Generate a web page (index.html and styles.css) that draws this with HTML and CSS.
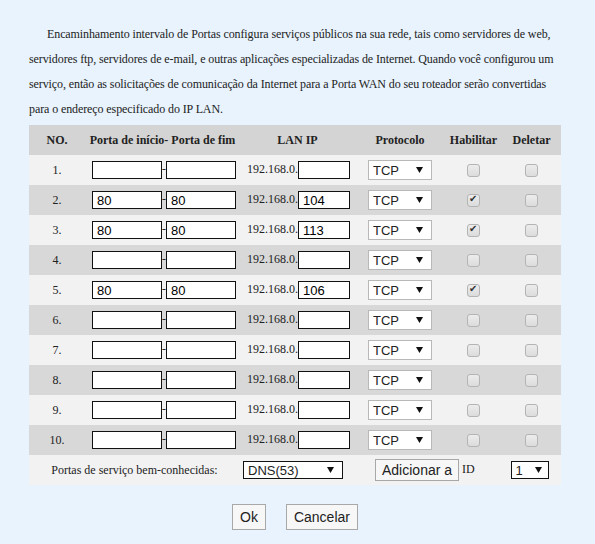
FILE: index.html
```html
<!DOCTYPE html>
<html lang="pt">
<head>
  <meta charset="UTF-8">
  <title>Encaminhamento de Portas</title>
  <link rel="stylesheet" href="styles.css">
</head>
<body>
  <main class="page">

    <p class="intro">Encaminhamento intervalo de Portas configura serviços públicos na sua rede, tais como servidores de web, servidores ftp, servidores de e-mail, e outras aplicações especializadas de Internet. Quando você configurou um serviço, então as solicitações de comunicação da Internet para a Porta WAN do seu roteador serão convertidas para o endereço especificado do IP LAN.</p>

    <table class="rules">
      <colgroup>
        <col class="c-no">
        <col class="c-port">
        <col class="c-ip">
        <col class="c-proto">
        <col class="c-on">
        <col class="c-del">
      </colgroup>
      <thead>
        <tr>
          <th>NO.</th>
          <th>Porta de início- Porta de fim</th>
          <th>LAN IP</th>
          <th>Protocolo</th>
          <th>Habilitar</th>
          <th>Deletar</th>
        </tr>
      </thead>
      <tbody id="rows">
      </tbody>
      <tfoot>
        <tr>
          <td colspan="2" class="known-label">Portas de serviço bem-conhecidas:</td>
          <td class="ip">
            <select class="sel sel-dns">
              <option>DNS(53)</option>
              <option>FTP(21)</option>
              <option>HTTP(80)</option>
            </select>
          </td>
          <td colspan="2" class="add">
            <button class="btn">Adicionar a</button> ID
          </td>
          <td>
            <select class="sel sel-id">
              <option>1</option><option>2</option><option>3</option><option>4</option><option>5</option>
              <option>6</option><option>7</option><option>8</option><option>9</option><option>10</option>
            </select>
          </td>
        </tr>
      </tfoot>
    </table>

    <div class="actions">
      <button class="btn">Ok</button>
      <button class="btn">Cancelar</button>
    </div>

  </main>

  <script>
    // port rules, empty ones have no ports
    var rules = [
      {}, {start: 80, end: 80, ip: 104, on: true}, {start: 80, end: 80, ip: 113, on: true},
      {}, {start: 80, end: 80, ip: 106, on: true}, {}, {}, {}, {}, {}
    ];

    var html = "";
    for (var i = 0; i < rules.length; i++) {
      var r = rules[i];
      html += `<tr>
        <td>${i + 1}.</td>
        <td class="ports"><input class="field port" value="${r.start || ""}">-<input class="field port" value="${r.end || ""}"></td>
        <td class="ip">192.168.0.<input class="field ip-last" value="${r.ip || ""}"></td>
        <td><select class="sel sel-proto"><option>TCP</option><option>UDP</option><option>Ambos</option></select></td>
        <td><input type="checkbox" class="check"${r.on ? " checked" : ""}></td>
        <td><input type="checkbox" class="check"></td>
      </tr>`;
    }
    document.getElementById("rows").innerHTML = html;
  </script>
</body>
</html>
```

FILE: styles.css
```css
body {
  margin: 0;
  background-color: #e8f3fd;
  font-family: "Liberation Serif", "Times New Roman", serif;
  color: #222;
}

.page {
  width: 532px;
  padding: 22px 34px 0 29px;
}

.intro {
  margin: 0 0 3px;
  font-size: 12px;
  line-height: 25px;
  letter-spacing: -0.1px;
  text-indent: 18px;
}

.rules {
  width: 532px;
  border-collapse: collapse;
  table-layout: fixed;
  font-size: 12px;
}

.c-no { width: 56px; }
.c-port { width: 155px; }
.c-ip { width: 115px; }
.c-proto { width: 90px; }
.c-on { width: 57px; }
.c-del { width: 59px; }

.rules th,
.rules td {
  height: 30px;
  padding: 0;
  text-align: center;
  vertical-align: middle;
  white-space: nowrap;
}

.rules thead tr {
  background-color: #d4d4d4;
}

.rules tbody tr:nth-child(odd),
.rules tfoot tr {
  background-color: #f2f2f2;
}

.rules tbody tr:nth-child(even) {
  background-color: #d8d8d8;
}

.rules .ports,
.rules .ip {
  text-align: left;
  padding-left: 7px;
}

.field {
  box-sizing: border-box;
  height: 18px;
  border: 1px solid #111;
  padding: 0 4px;
  font-family: "Liberation Sans", Arial, sans-serif;
  font-size: 13px;
  vertical-align: middle;
  background: white;
}

.port {
  width: 70px;
}

.ip-last {
  width: 52px;
}

.sel {
  box-sizing: border-box;
  height: 20px;
  padding: 0 4px;
  font-family: "Liberation Sans", Arial, sans-serif;
  font-size: 13px;
  color: #222;
  background: white url("data:image/svg+xml,%3Csvg xmlns='http://www.w3.org/2000/svg' width='7' height='6'%3E%3Cpath d='M0 0h7L3.5 6z' fill='%23111'/%3E%3C/svg%3E") no-repeat right 8px center;
  -webkit-appearance: none;
  appearance: none;
  border-radius: 0;
  vertical-align: middle;
}

.sel-proto {
  width: 64px;
  border: 1px solid #b8b8b8;
}

.sel-dns {
  width: 100px;
  height: 18px;
  border: 1px solid #111;
  margin-left: -4px;
}

.sel-id {
  width: 38px;
  height: 18px;
  border: 1px solid #111;
  margin-left: -4px;
  background-position: right 6px center;
}

.check {
  -webkit-appearance: none;
  appearance: none;
  box-sizing: border-box;
  width: 13px;
  height: 13px;
  margin: 0;
  border: 1px solid #b4b4b4;
  border-radius: 3px;
  background: linear-gradient(#ececec, #dcdcdc);
  vertical-align: middle;
  position: relative;
}

.check:checked::after {
  content: "\2714";
  position: absolute;
  left: 1px;
  top: -2px;
  font-size: 10px;
  font-family: "DejaVu Sans", sans-serif;
  color: #333;
}

.add {
  text-align: left !important;
  padding-left: 20px !important;
}

.btn {
  font-family: "Liberation Sans", Arial, sans-serif;
  font-size: 14px;
  color: #222;
  background-color: #f7f7f7;
  border: 1px solid #a8a8a8;
  border-radius: 0;
  padding: 0 6px;
  height: 22px;
  vertical-align: middle;
}

.actions {
  display: flex;
  justify-content: center;
  gap: 20px;
  margin-top: 19px;
}

.actions .btn {
  height: 26px;
  padding: 0 7px;
}
```
